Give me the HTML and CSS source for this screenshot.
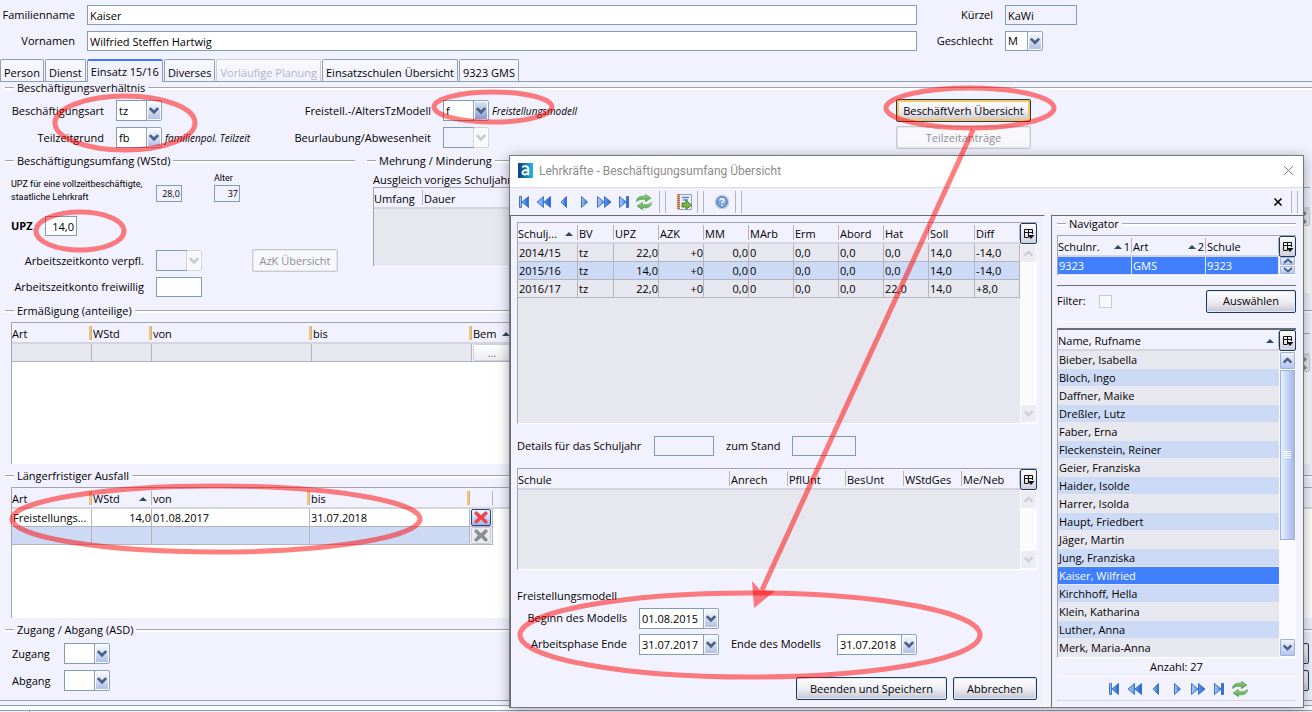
FILE: index.html
```html
<!DOCTYPE html>
<html lang="de">
<head>
<meta charset="utf-8">
<title>Lehrkräfte - Beschäftigungsumfang Übersicht</title>
<link rel="stylesheet" href="styles.css">
</head>
<body>
<svg class="defs" aria-hidden="true">
  <defs>
    <linearGradient id="blue" x1="0" y1="0" x2="1" y2="0"><stop offset="0" stop-color="#a9cdfb"/><stop offset="1" stop-color="#1d5fd0"/></linearGradient>
    <linearGradient id="green" x1="0" y1="0" x2="0" y2="1"><stop offset="0" stop-color="#9bd68a"/><stop offset="1" stop-color="#4f9f45"/></linearGradient>
    <linearGradient id="logo" x1="0" y1="0" x2="1" y2="0"><stop offset="0" stop-color="#0b3f78"/><stop offset="1" stop-color="#22b8ee"/></linearGradient>
    <symbol id="i-first" viewBox="0 0 16 16"><path d="M3.500 2.500h2v11h-2zM12.500 2.500v11L6 8z" fill="url(#blue)" stroke="#3f74cc"/></symbol>
    <symbol id="i-rew" viewBox="0 0 16 16"><path d="M7.500 2.500v11L1 8zM14.500 2.500v11L8 8z" fill="url(#blue)" stroke="#3f74cc"/></symbol>
    <symbol id="i-prev" viewBox="0 0 16 16"><path d="M10.500 2.500v11L5 8z" fill="url(#blue)" stroke="#3f74cc"/></symbol>
    <symbol id="i-next" viewBox="0 0 16 16"><path d="M5.500 2.500v11L11.500 8z" fill="url(#blue)" stroke="#3f74cc"/></symbol>
    <symbol id="i-fwd" viewBox="0 0 16 16"><path d="M1.500 2.500v11L8 8zM8.500 2.500v11L15 8z" fill="url(#blue)" stroke="#3f74cc"/></symbol>
    <symbol id="i-last" viewBox="0 0 16 16"><path d="M3.500 2.500v11L10 8zM10.500 2.500h2v11h-2z" fill="url(#blue)" stroke="#3f74cc"/></symbol>
    <symbol id="i-sync" viewBox="0 0 16 16"><g fill="url(#green)" stroke="#5a9c52" stroke-width=".7"><path d="M.5 7.500C.5 3.500 4 1.500 9.500 2.300V.3L15 4 9.500 7.700V5.500C6 4.700 3 5.500.5 7.500z"/><path d="M15.500 8.500c0 4-3.500 6-9 5.200v2L1 12l5.500-3.700v2.200c3.500.8 6.500 0 9-2z"/></g></symbol>
    <symbol id="i-report" viewBox="0 0 16 16"><path d="M3.500.500h12v15h-12z" fill="#eef0fa" stroke="#9aa0b8"/><path d="M1 .5h2.500v15H1z" fill="#e9a478"/><path d="M2.500 0v16" stroke="#b3542a" stroke-width="2" stroke-dasharray="1 1"/><path d="M6 3.500h7M7 6h5" stroke="#5a86d8" stroke-width="1.500"/><path d="M6 9h4V6.500l5.500 4.500L10 15.500V13H6z" fill="#74bb3d" stroke="#35701a" stroke-width=".8"/></symbol>
    <symbol id="i-help" viewBox="0 0 16 16"><circle cx="8" cy="8" r="6.500" fill="#7ba6dd" stroke="#c3cddd" stroke-width="1.600"/><circle cx="8" cy="8" r="5.300" fill="none" stroke="#4d7fc2"/><path d="M6 6.500C6 4 10.200 4 10 6.500 9.900 7.800 8 7.800 8 9.300M8 10.700v1.300" fill="none" stroke="#fff" stroke-width="1.500"/></symbol>
    <symbol id="i-chev" viewBox="0 0 10 10"><path d="M1.500 3L5 6.500 8.500 3" fill="none" stroke="currentColor" stroke-width="2.200"/></symbol>
    <symbol id="i-chevup" viewBox="0 0 10 10"><path d="M1.500 7L5 3.500 8.500 7" fill="none" stroke="currentColor" stroke-width="2.200"/></symbol>
    <symbol id="i-flatup" viewBox="0 0 10 6"><path d="M1 5L5 1.500 9 5" fill="none" stroke="currentColor" stroke-width="2"/></symbol>
    <symbol id="i-flatdown" viewBox="0 0 10 6"><path d="M1 1L5 4.500 9 1" fill="none" stroke="currentColor" stroke-width="2"/></symbol>
    <symbol id="i-cols" viewBox="0 0 12 12"><path d="M5 9.500H1.500v-8h8V6M1.500 4.500h8M5.500 1.500v8" fill="none" stroke="#111"/><path d="M4.500 7h7L8 11z" fill="#111"/></symbol>
    <symbol id="i-x" viewBox="0 0 16 14"><path d="M3.500 1L8 4.800 12.500 1 14.500 3 10.800 7 14.500 11 12.500 13 8 9.200 3.500 13 1.500 11 5.200 7 1.500 3z" fill="currentColor"/></symbol>
    <symbol id="i-sort" viewBox="0 0 8 4"><path d="M0 4L4 0l4 4z" fill="#2d4a60"/></symbol>
  </defs>
</svg>

<main class="page">
  <header class="person">
    <label for="fam">Familienname</label><input id="fam" value="Kaiser">
    <label for="kue">Kürzel</label><input id="kue" class="ro w72" readonly value="KaWi">
    <label for="vor">Vornamen</label><input id="vor" value="Wilfried Steffen Hartwig">
    <label for="ges">Geschlecht</label><span class="combo w38"><select id="ges"><option>M</option></select><svg><use href="#i-chev"/></svg></span>
  </header>

  <nav class="tabs">
    <button>Person</button><button>Dienst</button><button class="active">Einsatz 15/16</button><button>Diverses</button><button disabled>Vorläufige Planung</button><button>Einsatzschulen Übersicht</button><button>9323 GMS</button>
  </nav>

  <section class="group first">
    <h2>Beschäftigungsverhältnis</h2>
    <div class="relation">
      <label for="bart">Beschäftigungsart</label><span class="combo"><select id="bart"><option>tz</option></select><svg><use href="#i-chev"/></svg></span><span></span>
      <label for="frei">Freistell.-/AltersTzModell</label><span class="combo hot"><select id="frei"><option>f</option></select><svg><use href="#i-chev"/></svg></span><em>Freistellungsmodell</em>
      <button class="btn focus">BeschäftVerh Übersicht</button>
      <label for="tzg">Teilzeitgrund</label><span class="combo"><select id="tzg"><option>fb</option></select><svg><use href="#i-chev"/></svg></span><em>familienpol. Teilzeit</em>
      <label for="beu">Beurlaubung/Abwesenheit</label><span class="combo off"><select id="beu" disabled><option></option></select><svg><use href="#i-chev"/></svg></span><span></span>
      <button class="btn" disabled>Teilzeitanträge</button>
    </div>
  </section>

  <div class="scope">
    <section class="group scope-left">
      <h2>Beschäftigungsumfang (WStd)</h2>
      <div class="full">
        <label for="upzv" class="tiny full-text">UPZ für eine vollzeitbeschäftigte,<br>staatliche Lehrkraft</label>
        <input id="upzv" class="ro num mini" readonly value="28,0">
        <div class="age"><label for="alt" class="tiny">Alter</label><input id="alt" class="ro num mini" readonly value="37"></div>
      </div>
      <div class="upz"><label for="upz">UPZ</label><input id="upz" class="num" value="14,0"></div>
      <div class="azk">
        <label for="azv">Arbeitszeitkonto verpfl.</label><span class="combo off"><select id="azv" disabled><option></option></select><svg><use href="#i-chev"/></svg></span><button class="btn" disabled>AzK Übersicht</button>
        <label for="azf">Arbeitszeitkonto freiwillig</label><input id="azf" class="w46">
      </div>
    </section>
    <section class="group scope-mid">
      <h2>Mehrung / Minderung</h2>
      <p>Ausgleich voriges Schuljahr</p>
      <div class="grid-box gray mehrung"><table><colgroup><col class="c49"><col></colgroup><thead><tr><th>Umfang</th><th>Dauer</th></tr></thead></table></div>
    </section>
    <section class="group scope-right">
      <div class="grid-box"><div class="bar"></div><button class="xbtn" aria-label="Löschen"><svg><use href="#i-x"/></svg></button></div>
    </section>
  </div>

  <section class="group">
    <h2>Ermäßigung (anteilige)</h2>
    <div class="split">
      <div class="grid-box tall">
        <table class="marks">
          <colgroup><col class="c80"><col class="c60"><col class="c160"><col class="c160"><col></colgroup>
          <thead><tr><th>Art</th><th>WStd</th><th>von</th><th>bis</th><th>Bem <svg class="sort near"><use href="#i-sort"/></svg></th></tr></thead>
          <tbody><tr class="g"><td></td><td></td><td></td><td></td><td class="flat"><button class="dots">...</button></td></tr></tbody>
        </table>
      </div>
      <div class="grid-box side"><div class="bar"></div><button class="xbtn" aria-label="Löschen"><svg><use href="#i-x"/></svg></button></div>
    </div>
  </section>

  <section class="group">
    <h2>Längerfristiger Ausfall</h2>
    <div class="grid-box low">
      <table class="marks absence">
        <colgroup><col class="c80"><col class="c60"><col class="c158"><col class="c160"><col class="c23"><col></colgroup>
        <thead><tr><th>Art</th><th class="plain">WStd <svg class="sort"><use href="#i-sort"/></svg></th><th>von</th><th>bis</th><th class="plain"></th><th></th></tr></thead>
        <tbody>
          <tr><td>Freistellungs...</td><td class="r">14,0</td><td>01.08.2017</td><td>31.07.2018</td><td class="flat"><button class="xbtn red" aria-label="Löschen"><svg><use href="#i-x"/></svg></button></td><td class="none"></td></tr>
          <tr class="b"><td></td><td></td><td></td><td></td><td class="flat"><button class="xbtn" aria-label="Löschen"><svg><use href="#i-x"/></svg></button></td><td class="none"></td></tr>
        </tbody>
      </table>
    </div>
  </section>

  <section class="group">
    <h2>Zugang / Abgang (ASD)</h2>
    <div class="zugang">
      <label for="zu">Zugang</label><span class="combo"><select id="zu"><option></option></select><svg><use href="#i-chev"/></svg></span>
      <label for="ab">Abgang</label><span class="combo"><select id="ab"><option></option></select><svg><use href="#i-chev"/></svg></span>
      <div class="edge-buttons"><button class="btn" aria-label="Speichern"></button><button class="btn" aria-label="Abbrechen"></button></div>
    </div>
  </section>
  <footer class="status"><span></span></footer>
</main>

<div class="dialog" role="dialog" aria-label="Beschäftigungsumfang Übersicht">
  <div class="title">
    <svg class="logo" viewBox="0 0 16 16"><path d="M0 0h16v16H0z" fill="url(#logo)"/><path d="M4.500 4.500C7 2.500 11 3 11 6.500V13M11 7.500C6.500 7.500 4.500 8.500 4.800 10.500 5.200 13 9.500 12.800 11 10.500" fill="none" stroke="#fff" stroke-width="2"/></svg>
    <span>Lehrkräfte - Beschäftigungsumfang Übersicht</span>
    <button class="close" aria-label="Schließen"><svg viewBox="0 0 12 12"><path d="M1 1l10 10M11 1L1 11" stroke="#777" fill="none"/></svg></button>
  </div>
  <div class="toolbar">
    <div class="icons"><button><svg><use href="#i-first"/></svg></button><button><svg><use href="#i-rew"/></svg></button><button><svg><use href="#i-prev"/></svg></button><button><svg><use href="#i-next"/></svg></button><button><svg><use href="#i-fwd"/></svg></button><button><svg><use href="#i-last"/></svg></button><button><svg><use href="#i-sync"/></svg></button></div>
    <i class="sep"></i><button><svg><use href="#i-report"/></svg></button><i class="sep"></i><button><svg><use href="#i-help"/></svg></button><i class="sep"></i>
    <button class="end" aria-label="Schließen"><svg viewBox="0 0 16 16"><path d="M4.500 4.500l7 7M11.500 4.500l-7 7" stroke="#000" stroke-width="1.600"/></svg></button><i class="sep last"></i>
  </div>
  <div class="panes">
    <div class="pane left">
      <div class="scroll-box years">
        <table>
          <colgroup><col class="c60"><col class="c36"><col class="c45"><col class="c45"><col class="c45"><col class="c45"><col class="c45"><col class="c45"><col class="c45"><col class="c46"><col></colgroup>
          <thead><tr><th>Schulj... <svg class="sort"><use href="#i-sort"/></svg></th><th>BV</th><th>UPZ</th><th>AZK</th><th>MM</th><th>MArb</th><th>Erm</th><th>Abord</th><th>Hat</th><th>Soll</th><th class="tail">Diff</th></tr></thead>
          <tbody>
            <tr class="g"><td>2014/15</td><td>tz</td><td class="r">22,0</td><td class="r">+0</td><td class="r">0,0</td><td>0</td><td>0,0</td><td>0,0</td><td>0,0</td><td>14,0</td><td>-14,0</td></tr>
            <tr class="b"><td>2015/16</td><td>tz</td><td class="r">14,0</td><td class="r">+0</td><td class="r">0,0</td><td>0</td><td>0,0</td><td>0,0</td><td>0,0</td><td>14,0</td><td>-14,0</td></tr>
            <tr class="g"><td>2016/17</td><td>tz</td><td class="r">22,0</td><td class="r">+0</td><td class="r">0,0</td><td>0</td><td>0,0</td><td>0,0</td><td>22,0</td><td>14,0</td><td>+8,0</td></tr>
          </tbody>
        </table>
        <div class="rail off"><button class="pick" aria-label="Spalten"><svg><use href="#i-cols"/></svg></button><button class="arr" aria-label="Nach oben"><svg><use href="#i-chevup"/></svg></button><span class="track"></span><button class="arr" aria-label="Nach unten"><svg><use href="#i-chev"/></svg></button></div>
      </div>
      <div class="details"><label for="dsj">Details für das Schuljahr</label><input id="dsj" class="ro" readonly><label for="dst">zum Stand</label><input id="dst" class="ro" readonly></div>
      <div class="scroll-box schools">
        <table>
          <colgroup><col><col class="c58"><col class="c58"><col class="c58"><col class="c58"><col class="c58"></colgroup>
          <thead><tr><th>Schule</th><th>Anrech</th><th>PflUnt</th><th>BesUnt</th><th>WStdGes</th><th class="tail">Me/Neb</th></tr></thead>
        </table>
        <div class="rail off"><button class="pick" aria-label="Spalten"><svg><use href="#i-cols"/></svg></button><button class="arr" aria-label="Nach oben"><svg><use href="#i-chevup"/></svg></button><span class="track"></span><button class="arr" aria-label="Nach unten"><svg><use href="#i-chev"/></svg></button></div>
      </div>
      <h3>Freistellungsmodell</h3>
      <div class="model">
        <label for="mb">Beginn des Modells</label><span class="combo date"><select id="mb"><option>01.08.2015</option></select><svg><use href="#i-chev"/></svg></span><span></span><span></span>
        <label for="ma">Arbeitsphase Ende</label><span class="combo date"><select id="ma"><option>31.07.2017</option></select><svg><use href="#i-chev"/></svg></span>
        <label for="me">Ende des Modells</label><span class="combo date"><select id="me"><option>31.07.2018</option></select><svg><use href="#i-chev"/></svg></span>
      </div>
      <div class="actions"><button class="btn">Beenden und Speichern</button><button class="btn">Abbrechen</button></div>
    </div>
    <div class="pane right">
      <h2>Navigator</h2>
      <div class="scroll-box nav">
        <table>
          <colgroup><col class="c74"><col class="c74"><col></colgroup>
          <thead><tr><th>Schulnr. <span class="ord"><svg class="sort"><use href="#i-sort"/></svg>1</span></th><th>Art <span class="ord"><svg class="sort"><use href="#i-sort"/></svg>2</span></th><th class="tail">Schule</th></tr></thead>
          <tbody><tr class="sel"><td>9323</td><td>GMS</td><td>9323</td></tr></tbody>
        </table>
        <div class="rail"><button class="pick" aria-label="Spalten"><svg><use href="#i-cols"/></svg></button><button class="arr half" aria-label="Nach oben"><svg><use href="#i-flatup"/></svg></button><button class="arr half" aria-label="Nach unten"><svg><use href="#i-flatdown"/></svg></button></div>
      </div>
      <div class="filter"><label for="fil">Filter:</label><input id="fil" type="checkbox" disabled><button class="btn">Auswählen</button></div>
      <div class="scroll-box names">
        <table>
          <thead><tr><th class="tail">Name, Rufname <svg class="sort"><use href="#i-sort"/></svg></th></tr></thead>
          <tbody>
            <tr><td>Bieber, Isabella</td></tr><tr><td>Bloch, Ingo</td></tr><tr><td>Daffner, Maike</td></tr><tr><td>Dreßler, Lutz</td></tr><tr><td>Faber, Erna</td></tr><tr><td>Fleckenstein, Reiner</td></tr><tr><td>Geier, Franziska</td></tr><tr><td>Haider, Isolde</td></tr><tr><td>Harrer, Isolda</td></tr><tr><td>Haupt, Friedbert</td></tr><tr><td>Jäger, Martin</td></tr><tr><td>Jung, Franziska</td></tr><tr class="sel"><td>Kaiser, Wilfried</td></tr><tr><td>Kirchhoff, Hella</td></tr><tr><td>Klein, Katharina</td></tr><tr><td>Luther, Anna</td></tr><tr><td>Merk, Maria-Anna</td></tr>
          </tbody>
        </table>
        <div class="rail"><button class="pick" aria-label="Spalten"><svg><use href="#i-cols"/></svg></button><button class="arr" aria-label="Nach oben"><svg><use href="#i-chevup"/></svg></button><span class="track"><span class="thumb"></span></span><button class="arr" aria-label="Nach unten"><svg><use href="#i-chev"/></svg></button></div>
      </div>
      <p class="count">Anzahl: 27</p>
      <div class="icons foot"><button><svg><use href="#i-first"/></svg></button><button><svg><use href="#i-rew"/></svg></button><button><svg><use href="#i-prev"/></svg></button><button><svg><use href="#i-next"/></svg></button><button><svg><use href="#i-fwd"/></svg></button><button><svg><use href="#i-last"/></svg></button><button><svg><use href="#i-sync"/></svg></button></div>
    </div>
  </div>
</div>

<svg class="marker" width="1312" height="712" viewBox="0 0 1312 712" aria-hidden="true">
  <ellipse cx="125" cy="123" rx="70" ry="27"/>
  <ellipse cx="493" cy="107" rx="59" ry="15"/>
  <ellipse cx="970" cy="108" rx="84" ry="20"/>
  <ellipse cx="80" cy="231" rx="44" ry="19"/>
  <ellipse cx="216" cy="519" rx="204" ry="33"/>
  <ellipse cx="750" cy="635" rx="230" ry="42"/>
  <path d="M973 130L762 590"/>
  <path class="head" d="M754 608L752 581 760 590 775 591z"/>
</svg>
</body>
</html>
```
FILE: styles.css
```css
* { box-sizing: border-box; }
html { height: 100%; }
body { margin: 0; min-height: 100%; position: relative; overflow: hidden; background: #f2f2ff; color: #000; font: 11px/14px "Open Sans", "Noto Sans", sans-serif; }
input, select, button { font: inherit; color: inherit; margin: 0; border-radius: 0; }
button { padding: 0; border: 0; background: none; }
h2, h3, p { margin: 0; font-size: 11px; font-weight: 400; }
.defs { position: absolute; width: 0; height: 0; }

/* Form controls */
input { height: 20px; border: 1px solid #7f9db9; background: #fff; padding: 0 2px; min-width: 0; }
.ro { background: #f2f2ff; }
.num { text-align: right; }
.w72 { width: 72px; }
.w46 { width: 46px; }

.combo { display: inline-grid; width: 46px; height: 21px; }
.combo > * { grid-area: 1 / 1; }
.combo select { appearance: none; width: calc(100% - 15px); height: 100%; border: 1px solid #7f9db9; background: #fff; padding: 0 0 0 2px; opacity: 1; }
.combo svg { justify-self: end; width: 16px; height: 100%; padding: 1px; border: 1px solid #8ba3c7; border-radius: 2px; background: linear-gradient(#fdfdff, #aebde6); box-shadow: inset 0 0 0 1px #fff; color: #4a6185; pointer-events: none; }
.combo.hot svg { background: linear-gradient(#dfe6f5, #7f98cf); }
.combo.off select { background: #f2f2ff; }
.combo.off svg { border-color: #d2d2dc; background: #f8f8fc; color: #c9c9d2; }
.w38 { width: 38px; }
.date { width: 80px; }

.btn { height: 23px; border: 1px solid #183a66; border-radius: 2px; background: linear-gradient(#fff, #eeeef4 50%, #c6c6d4); box-shadow: inset 0 0 0 1px #e6e6f0; }
.btn:disabled { border-color: #c9c9d2; background: #f8f8fc; color: #8f8f96; }
.btn.focus { box-shadow: inset 0 0 0 2px #fcc55a; }

/* Person header */
.person { display: grid; grid-template-columns: 75px 1fr 64px 307px; gap: 6px 12px; padding-top: 5px; align-items: center; }
.person label, .relation label { text-align: right; white-space: nowrap; }
.person .combo { height: 20px; }

.tabs { display: flex; align-items: flex-end; gap: 1px; height: 23px; margin-top: 8px; border-bottom: 1px solid #8fa0b4; }
.tabs button { height: 22px; padding: 4px 3px 0; border: 1px solid #8fa0b4; border-bottom: 0; border-radius: 2px 2px 0 0; background: linear-gradient(#f8f8ff, #f2f2ff); white-space: nowrap; }
.tabs .active { height: 23px; padding-top: 0; border-top: 2px solid #3f78f0; margin-bottom: -1px; background: #f2f2ff; }
.tabs button:disabled { color: #b5b5bd; border-color: #cfcfd9; }

/* Titled groups */
.group { margin-top: 5px; }
.group.first { margin-top: -1px; }
h2 { display: flex; align-items: center; gap: 3px; padding-left: 5px; height: 14px; white-space: nowrap; }
h2::before, h2::after { content: ""; height: 2px; border-top: 1px solid #a5a5ae; background: #fff; width: 9px; }
h2::after { flex: 1; }

.relation { display: grid; grid-template-columns: 116px 46px 118px 163px 46px 407px 135px; gap: 4px 0; padding-top: 4px; align-items: center; grid-auto-rows: 23px; }
.relation label { padding-right: 12px; }
.relation em { padding-left: 3px; font-size: 10px; white-space: nowrap; }

.scope { display: flex; gap: 12px; margin-top: 5px; }
.scope .group { margin-top: 0; }
.scope-left { width: 355px; }
.scope-mid { flex: 1; }
.scope-mid h2 { padding-left: 0; }
.scope-mid p { padding: 5px 0 0 6px; white-space: nowrap; }
.mehrung { height: 80px; }
.scope-right { width: 200px; padding: 33px 2px 0 0; }
.scope-right .grid-box { height: 106px; }
.tiny { font: 9px/13px Roboto, "Open Sans", sans-serif; }
.full { display: flex; align-items: flex-start; padding-left: 11px; height: 48px; }
.full-text { width: 145px; padding-top: 10px; }
.mini { width: 26px; height: 17px; font-size: 9px; padding-right: 1px; margin-top: 17px; }
.age { display: grid; margin: 4px 0 0 32px; }
.age .mini { margin: 0; }
.upz { display: flex; align-items: center; padding-left: 11px; margin-bottom: 13px; }
.upz label { width: 34px; font-weight: 700; }
.upz input { width: 32px; }
.azk { display: grid; grid-template-columns: 144px 46px 124px; grid-template-rows: 23px 20px; gap: 5px 12px; align-items: center; }
.azk label { text-align: right; white-space: nowrap; }
.azk .btn { margin-left: 38px; }
.scope + .group { margin-top: 7px; }

.grid-box { margin: 4px 0 0 11px; border-left: 1px solid #a5a5ae; border-top: 1px solid #a5a5ae; background: #fff; overflow: hidden; }
.scope .grid-box { margin: 0 0 0 6px; }
.grid-box.gray { background: #e7e7ef; border-bottom: 1px solid #fff; }
.tall { height: 142px; }
.low { height: 131px; }
.split { display: grid; grid-template-columns: 1fr 200px; gap: 20px; }
.grid-box.side { margin: 15px 2px 0 0; }
.bar { height: 21px; background: #f2f2ff; border-bottom: 2px solid #d5d5df; }

/* Data tables */
table { width: 100%; table-layout: fixed; border-collapse: separate; border-spacing: 0; }
.c23 { width: 23px; }
.c36 { width: 36px; }
.c45 { width: 45px; }
.c46 { width: 46px; }
.c49 { width: 49px; }
.c58 { width: 58px; }
.c60 { width: 60px; }
.c74 { width: 74px; }
.c80 { width: 80px; }
.c158 { width: 158px; }
.c160 { width: 160px; }
th { height: 21px; padding: 2px 0 0 1px; font-weight: 400; text-align: left; white-space: nowrap; border-bottom: 2px solid #d5d5df; background: linear-gradient(#b4b4bd, #b4b4bd) right 2px / 1px 15px no-repeat #f2f2ff; }
th:first-child { padding-left: 0; }
.marks th { background: linear-gradient(90deg, #ffc261 2px, #b4b4bd 2px) right 3px / 3px 14px no-repeat #f2f2ff; }
.marks th.plain { background: linear-gradient(#b4b4bd, #b4b4bd) right 3px / 1px 14px no-repeat #f2f2ff; }
.marks th:last-child { background: #f2f2ff; }
td { height: 18px; padding: 0 0 0 1px; border-right: 1px solid #b4b4bd; border-bottom: 1px solid #b4b4bd; overflow: hidden; white-space: nowrap; }
.r { text-align: right; }
.g td { background: #e7e7ef; }
.b td { background: #cddaf6; }
.marks td.flat { padding: 0 0 0 1px; background: #f2f2ff; }
.marks td.none { background: #fff; border: 0; }
.sel td { background: #4080ff; color: #fff; border-color: #e7e7ef; }
.sort { float: right; width: 8px; height: 4px; margin: 5px 5px 0 0; }
.sort.near { float: none; margin: 0 0 2px 3px; }
.ord { float: right; padding-right: 2px; }
.ord .sort { float: none; margin: 0 2px 2px 0; }
.dots { display: block; width: 38px; height: 17px; line-height: 12px; border: 1px solid #d2d2dc; border-radius: 2px; background: linear-gradient(#fff, #ececf2); color: #77777d; }
.xbtn { display: block; width: 20px; height: 17px; border: 1px solid #c9c9d2; border-radius: 2px; background: #e9e9f0; color: #8c8c8c; }
.xbtn svg { display: block; width: 18px; height: 15px; }
.xbtn.red { border-color: #1d4487; background: linear-gradient(#f4f7ff, #9fb8ea); color: #f2434b; }
.grid-box > .xbtn { margin-left: auto; }

.zugang { display: grid; grid-template-columns: 52px 46px 1fr; gap: 6px 0; padding: 6px 0 0 12px; align-items: center; }
.edge-buttons { grid-area: 1 / 3 / 3; justify-self: end; display: grid; gap: 6px; }
.edge-buttons .btn { width: 90px; height: 21px; margin-right: 3px; }
.status { margin-top: 9px; border-top: 1px solid #8fa0b4; padding-top: 4px; }
.status span { display: block; height: 6px; border-top: 1px solid #8fa0b4; border-bottom: 1px solid #8fa0b4; background: #fff; }
.status::after { content: ""; display: block; width: 29px; height: 2px; border-right: 1px solid #8fa0b4; }

/* Overview dialog */
.dialog { position: absolute; left: 509px; right: 8px; top: 155px; border: 1px solid #77777d; background: #f2f2ff; box-shadow: 0 2px 12px rgba(0, 0, 0, .35); }
.title { display: flex; align-items: center; height: 32px; padding: 0 9px 2px 8px; background: #fff; border-bottom: 1px solid #d9d9e4; color: #8c8c8c; font: 12px/14px Roboto, "Open Sans", sans-serif; }
.logo { width: 15px; height: 15px; margin-right: 6px; }
.close { margin-left: auto; width: 11px; height: 11px; }
.close svg { display: block; width: 11px; height: 11px; }
.toolbar { display: flex; align-items: center; height: 27px; padding-left: 4px; }
.icons { display: flex; }
.toolbar .icons { margin-right: 2px; }
.toolbar button, .icons button { width: 20px; height: 18px; }
.toolbar svg, .icons svg { display: block; width: 16px; height: 16px; margin: 1px auto; }
.toolbar .sep { width: 7px; height: 22px; margin: 0 8px 0 3px; border: solid #b4b4bd; border-width: 0 1px; }
.toolbar .end { margin-left: auto; }
.toolbar .sep.last { margin: 0 5px 0 3px; }

.panes { display: grid; grid-template-columns: 1fr 252px; gap: 6px; }
.pane { border-top: 1px solid #6b6b72; border-left: 1px solid #6b6b72; padding: 6px 7px 0 6px; }
.pane.left { border-right: 1px solid #fff; }
.scroll-box { display: grid; grid-template-columns: 1fr 17px; align-items: start; border-top: 1px solid #a5a5ae; border-left: 1px solid #a5a5ae; border-bottom: 1px solid #fff; background: #e7e7ef; }
.rail { align-self: stretch; display: flex; flex-direction: column; background: #fafaff; }
.pick { display: grid; place-items: center; height: 21px; border: 1px solid #183a66; border-radius: 2px; background: linear-gradient(#fff, #d0d0dc); }
.pick svg { width: 12px; height: 12px; }
.arr { display: grid; place-items: center; height: 17px; margin: 1px; border: 1px solid #9db2dc; border-radius: 1px; background: linear-gradient(#eef3ff, #b4c6f0); color: #4a6185; }
.arr svg { width: 11px; height: 11px; }
.arr.half { height: 8px; margin: 0 1px 1px; }
.arr.half svg { width: 10px; height: 6px; }
.off .arr { border-color: #ececf2; background: #ececf2; color: #cfcfd6; }
.track { flex: 1; display: grid; align-content: start; padding: 0 1px; }
.thumb { height: 170px; border: 1px solid #9db2dc; background: linear-gradient(90deg, #e9f0ff, #a5b9ea); display: grid; place-items: center; }
.thumb::before { content: ""; width: 7px; height: 8px; background: repeating-linear-gradient(#fff 0 1px, transparent 1px 2px); }
.years { height: 202px; }
.details { display: grid; grid-template-columns: 125px 60px 54px 64px; gap: 12px; padding: 12px 0; align-items: center; white-space: nowrap; }
.schools { height: 102px; }
h3 { margin: 19px 0 5px; }
.model { display: grid; grid-template-columns: 110px 80px 94px 80px; gap: 5px 12px; }
.model label { white-space: nowrap; padding-top: 3px; }
.model label:nth-of-type(-n+2) { text-align: right; }
.actions { display: flex; justify-content: flex-end; gap: 6px; padding-top: 22px; }
.actions .btn { width: 84px; }
.actions .btn:first-child { width: 151px; }

.pane.right { padding-top: 1px; padding-left: 5px; }
.right h2 { padding: 0; margin-bottom: 4px; }
.filter { display: flex; align-items: center; height: 37px; margin: 9px 0 6px; border-top: 1px solid #6b6b72; border-bottom: 1px solid #fff; padding-bottom: 5px; }
.filter input { appearance: none; width: 13px; height: 13px; margin: 0 0 0 13px; border: 1px solid #c9c9d2; background: #f8f8fc; padding: 0; }
.filter .btn { margin-left: auto; width: 90px; }
.names { border-top: 2px solid #6b6b72; }
.names tr:nth-child(even) td { background: #cddaf6; }
.names tr.sel td { background: #4080ff; }
.names td { border-right: 0; border-bottom-color: #e7e7ef; }
.count { text-align: center; line-height: 18px; border-bottom: 1px solid #fff; }
.foot { justify-content: center; gap: 1px; padding: 3px 0 2px; border-bottom: 1px solid #d5d5df; margin-bottom: 6px; }

/* Highlight marks drawn over the screen */
.marker { position: absolute; left: 0; top: 0; pointer-events: none; fill: none; stroke: rgba(255, 0, 0, .5); stroke-width: 5px; }
.marker .head { fill: rgba(255, 0, 0, .5); stroke: none; }
```
